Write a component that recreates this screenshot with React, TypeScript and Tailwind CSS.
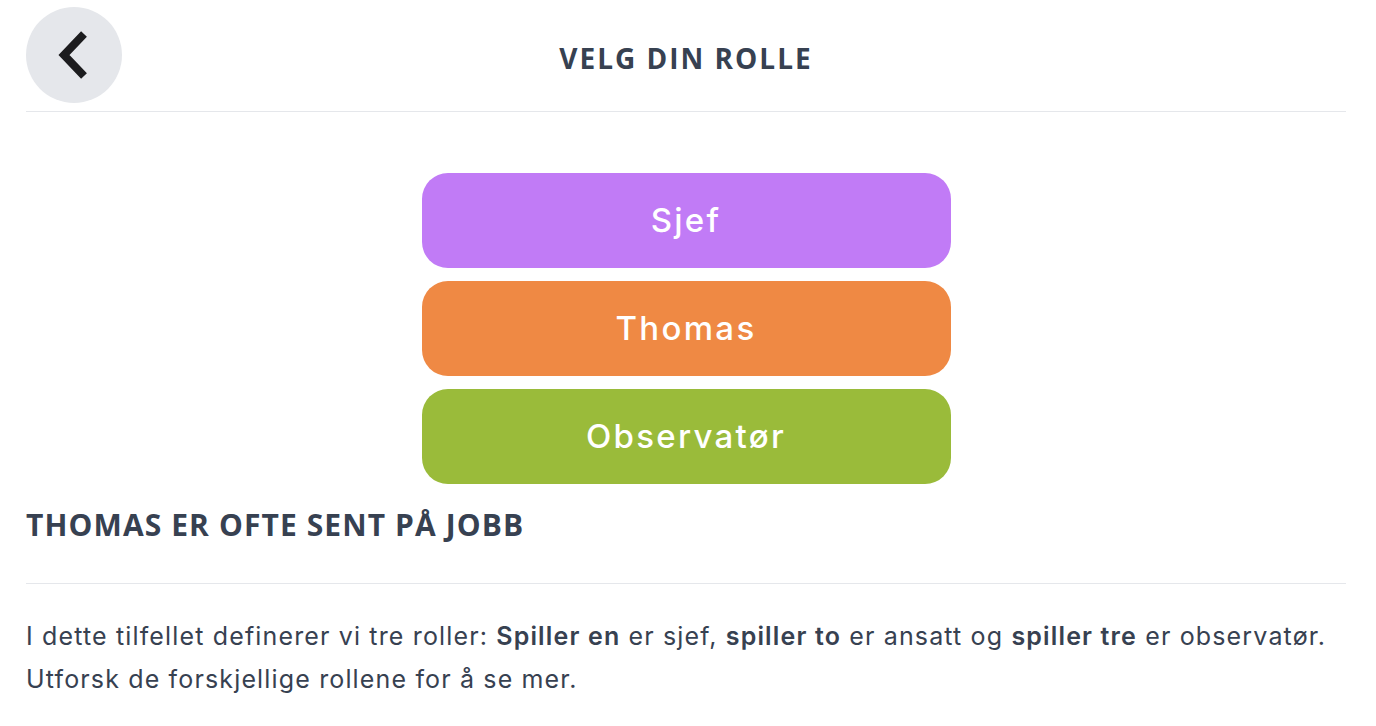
import React from "react";

const heading = { fontFamily: '"Open Sans", "Liberation Sans", sans-serif' };
const inter = { fontFamily: 'Inter, "Liberation Sans", sans-serif' };

export default function App() {
  const roles = [
    { label: "Sjef", cls: "bg-[#c17bf6]" },
    { label: "Thomas", cls: "bg-[#ef8944]" },
    { label: "Observatør", cls: "bg-[#9abb3a]" },
  ];
  return (
    <div className="w-[1376px] h-[726px] bg-white pl-[26px] pr-[30px] overflow-hidden">
      <div className="pt-[7px] pb-[8px] border-b border-[#e5e7eb] grid grid-cols-[96px_1fr_96px] items-center">
        <button className="w-[96px] h-[96px] rounded-full bg-[#e5e7eb] flex items-center justify-center">
          <svg width="96" height="96" viewBox="0 0 96 96">
            <path d="M58 27 L38 48 L58 69" fill="none" stroke="#1c1c1e" strokeWidth="8" strokeLinecap="butt" strokeLinejoin="miter" />
          </svg>
        </button>
        <h1 style={heading} className="text-center text-[28px] leading-[42px] font-bold text-[#374151] mt-[5px] tracking-[2px]">
          VELG DIN ROLLE
        </h1>
        <div />
      </div>

      <div className="mt-[61px] flex flex-col items-center gap-[13px]">
        {roles.map((r) => (
          <button
            key={r.label}
            style={inter}
            className={`w-[529px] h-[95px] rounded-[26px] ${r.cls} text-white text-[33px] font-medium tracking-[2.3px] flex items-center justify-center`}
          >
            {r.label}
          </button>
        ))}
      </div>

      <h2 style={heading} className="mt-[21px] text-[30px] leading-[40px] font-bold text-[#374151] tracking-[1.1px]">
        THOMAS ER OFTE SENT PÅ JOBB
      </h2>
      <div className="mt-[38px] border-b border-[#e5e7eb]" />

      <p style={inter} className="mt-[31px] text-[25px] leading-[43px] text-[#374151] tracking-[1.15px]">
        I dette tilfellet definerer vi tre roller: <span className="font-semibold">Spiller en</span> er sjef,{" "}
        <span className="font-semibold">spiller to</span> er ansatt og{" "}
        <span className="font-semibold">spiller tre</span> er observatør. Utforsk de forskjellige rollene for å se mer.
      </p>
    </div>
  );
}
